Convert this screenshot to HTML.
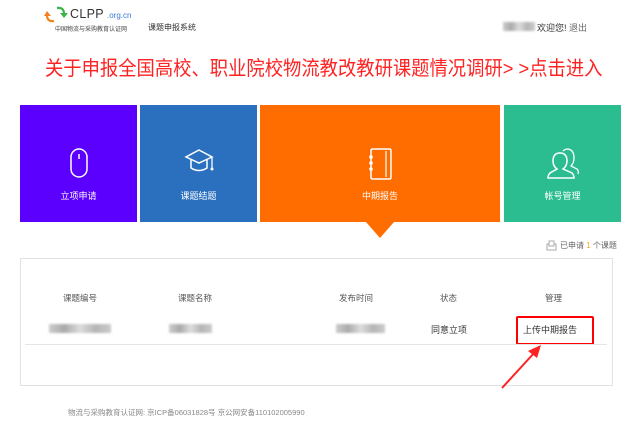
<!DOCTYPE html>
<html><head><meta charset="utf-8"><style>
body{margin:0;width:639px;height:439px;background:#fff;position:relative;overflow:hidden;font-family:"Liberation Sans","Noto Sans CJK SC",sans-serif;}
.a{position:absolute;white-space:nowrap}
.tile{position:absolute;top:105px;height:117px;color:#fff;font-size:9px;text-align:center}
.tile span{position:absolute;left:0;right:0;top:84px}
.tile svg{position:absolute;left:50%;top:43px;transform:translateX(-50%)}
.h{font-size:8.5px;color:#555}
.blur{position:absolute;height:9px;background:linear-gradient(90deg,#ccc,#aaa,#ddd,#b5b5b5,#ccc);filter:blur(1px)}
</style></head><body>
<svg class="a" style="left:44px;top:5px" width="24" height="20" viewBox="0 0 24 20"><path d="M13 3 Q20 2 20 9" stroke="#3bb54a" stroke-width="2.2" fill="none"/><path d="M16 8 L20 13 L24 8" fill="#3bb54a"/><path d="M10 16 Q3 17 3 10" stroke="#f58220" stroke-width="2.2" fill="none"/><path d="M0 11 L3 6 L7 11" fill="#f58220"/></svg>
<div class="a" style="left:70px;top:7px;font-size:12.5px;color:#333;letter-spacing:0.3px">CLPP</div>
<div class="a" style="left:107px;top:11px;font-size:8px;color:#3a7bd5">.org.cn</div>
<div class="a" style="left:55px;top:24px;font-size:6px;color:#444">中国物流与采购教育认证网</div>
<div class="a" style="left:148px;top:22px;font-size:8px;color:#333">课题申报系统</div>
<div class="blur" style="left:503px;top:22px;width:32px"></div>
<div class="a" style="left:537px;top:21px;font-size:9px;color:#333">欢迎您! <span style="color:#666">退出</span></div>
<div class="a" style="left:45px;top:52px;font-size:19.7px;color:#f22;transform:scaleX(0.93);transform-origin:0 0">关于申报全国高校、职业院校物流教改教研课题情况调研&gt; &gt;点击进入</div>

<div class="tile" style="left:20px;width:117px;background:#5b00ff"><svg width="18" height="30" viewBox="0 0 18 30"><rect x="1" y="1" width="16" height="28" rx="8" stroke="#fff" stroke-width="1.5" fill="none"/><line x1="9" y1="6" x2="9" y2="11" stroke="#fff" stroke-width="1.5"/></svg><span>立项申请</span></div>
<div class="tile" style="left:140px;width:117px;background:#2b70bf"><svg width="30" height="28" viewBox="0 0 30 28"><path d="M15 2 L28 9 L15 15 L2 9 Z" stroke="#fff" stroke-width="1.5" fill="none"/><path d="M7 12 V20 Q15 25 23 20 V12" stroke="#fff" stroke-width="1.5" fill="none"/><path d="M28 9 V20" stroke="#fff" stroke-width="1.3"/><circle cx="28" cy="21" r="1.5" fill="#fff"/></svg><span>课题结题</span></div>
<div class="tile" style="left:260px;width:240px;background:#ff6d00"><svg width="24" height="32" viewBox="0 0 24 32"><rect x="3" y="1" width="20" height="30" rx="1.5" stroke="#fff" stroke-width="1.5" fill="none"/><line x1="18" y1="3" x2="18" y2="29" stroke="#fff" stroke-width="1.2"/><g fill="#fff"><circle cx="3" cy="9" r="1.8"/><circle cx="3" cy="15" r="1.8"/><circle cx="3" cy="21" r="1.8"/></g></svg><span>中期报告</span></div>
<div class="a" style="left:366px;top:222px;width:0;height:0;border-left:14px solid transparent;border-right:14px solid transparent;border-top:16px solid #ff6d00"></div>
<div class="tile" style="left:504px;width:117px;background:#2bbd8f"><svg width="34" height="32" viewBox="0 0 34 32"><path d="M14 5 Q21 5 21 13 Q21 18 17 21 L26 25 Q28 27 28 30 H2 Q2 27 4 25 L11 21 Q7 18 7 13 Q7 5 14 5 Z" stroke="#fff" stroke-width="1.5" fill="none"/><path d="M17 3 Q19 1 22 1 Q28 2 28 10 Q28 15 25 18 L31 21 Q33 23 32 26" stroke="#fff" stroke-width="1.3" fill="none"/></svg><span>帐号管理</span></div>

<svg class="a" style="left:546px;top:240px" width="11" height="11" viewBox="0 0 11 11"><rect x="1" y="4" width="9" height="6" stroke="#aaa" fill="none"/><rect x="3" y="1" width="5" height="5" stroke="#aaa" fill="#fff"/></svg>
<div class="a" style="left:560px;top:240px;font-size:8px;color:#666">已申请 <span style="color:#f6a623">1</span> 个课题</div>

<div class="a" style="left:20px;top:258px;width:591px;height:126px;border:1px solid #e2e2e2"></div>
<div class="a h" style="left:63px;top:292px">课题编号</div>
<div class="a h" style="left:178px;top:292px">课题名称</div>
<div class="a h" style="left:339px;top:292px">发布时间</div>
<div class="a h" style="left:440px;top:292px">状态</div>
<div class="a h" style="left:545px;top:292px">管理</div>
<div class="blur" style="left:49px;top:324px;width:62px"></div>
<div class="blur" style="left:169px;top:324px;width:43px"></div>
<div class="blur" style="left:336px;top:324px;width:49px"></div>
<div class="a" style="left:431px;top:323px;font-size:9px;color:#333">同意立项</div>
<div class="a" style="left:523px;top:323px;font-size:9px;color:#333">上传中期报告</div>
<div class="a" style="left:516px;top:316px;width:74px;height:25px;border:2px solid #f00;border-radius:2px"></div>
<div class="a" style="left:25px;top:344px;width:582px;height:1px;background:#e5e5e5"></div>
<svg class="a" style="left:0;top:0" width="639" height="439"><line x1="502" y1="388" x2="535" y2="352" stroke="#f22" stroke-width="2"/><path d="M541 345 L528 351 L537 358 Z" fill="#f22"/></svg>
<div class="a" style="left:68px;top:407px;font-size:7.5px;color:#888">物流与采购教育认证网: 京ICP备06031828号 京公网安备110102005990</div>
</body></html>
